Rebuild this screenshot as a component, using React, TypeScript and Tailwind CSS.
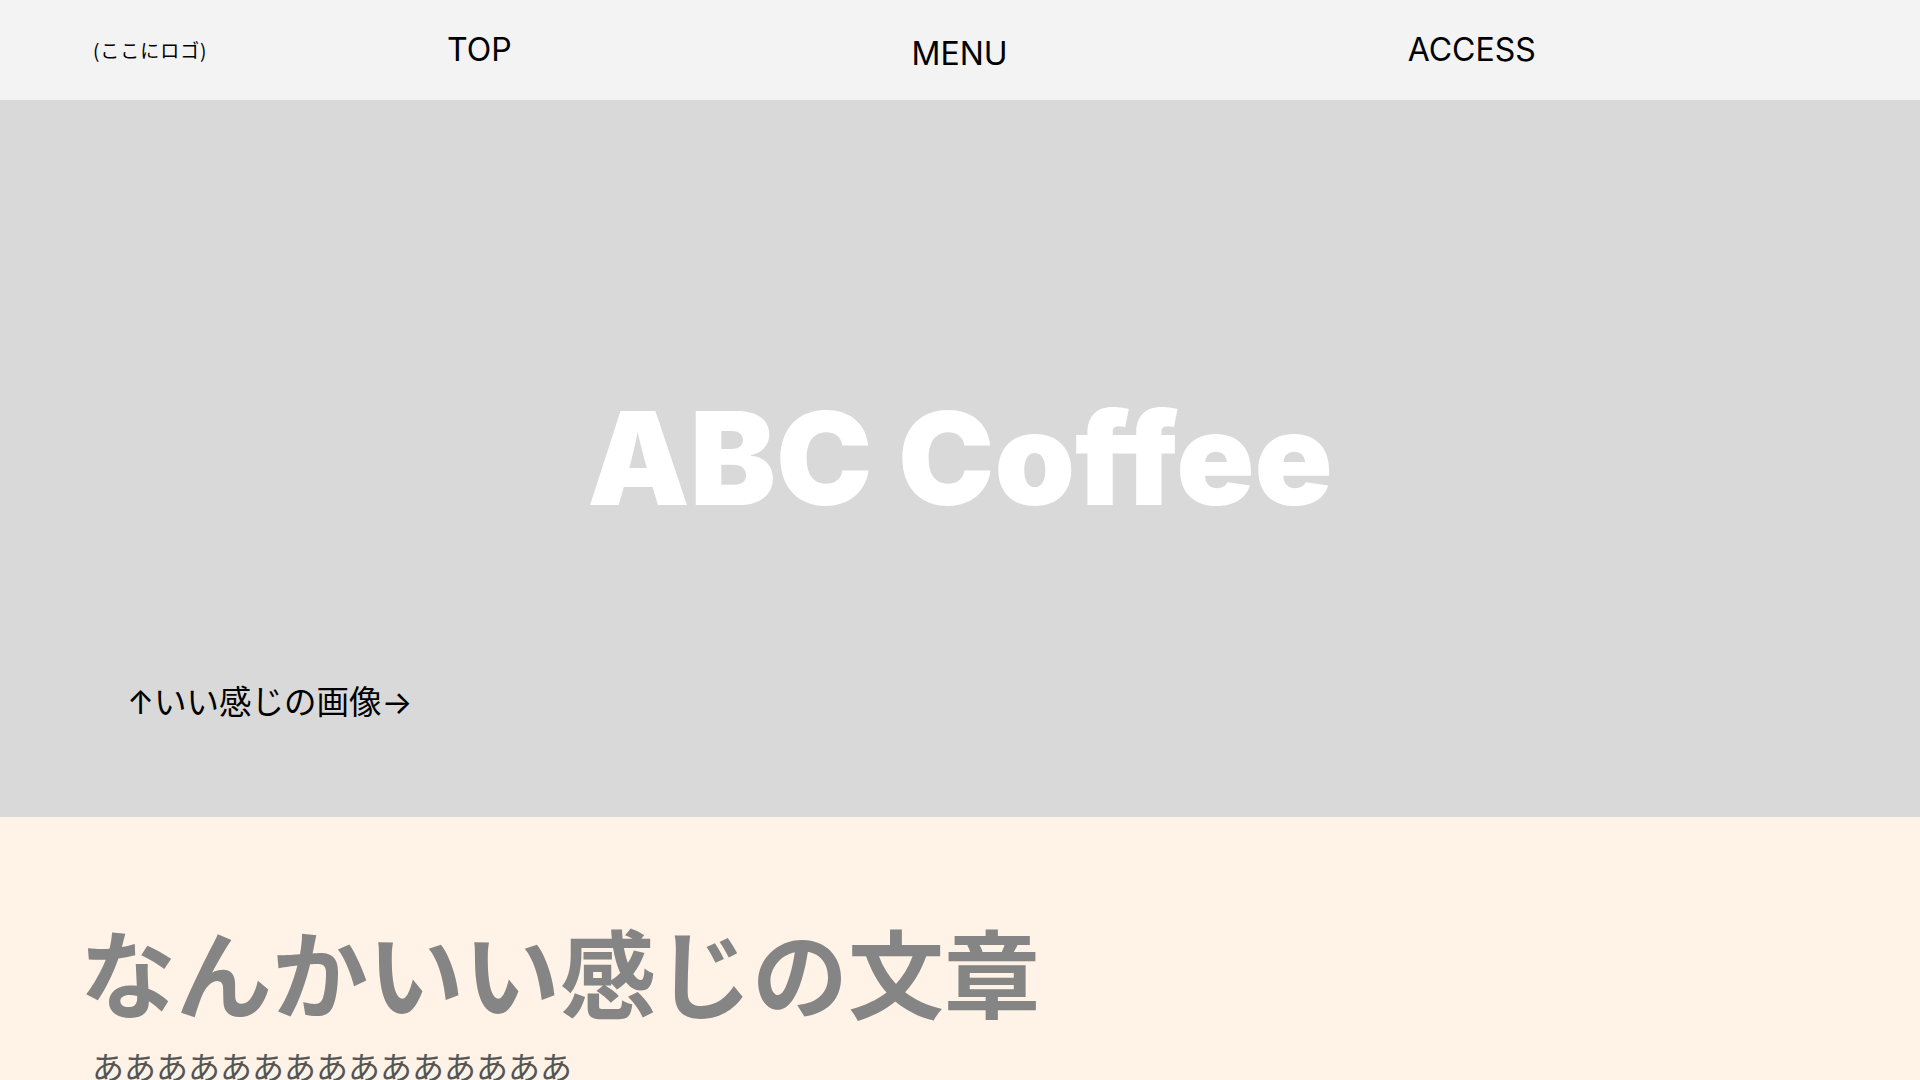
export default function App() {
  const latin = "font-['Inter','Noto_Sans_CJK_JP',sans-serif]";

  return (
    <div className={`min-h-screen bg-[#fff2e6] ${latin}`}>
      {/* Header */}
      <header className="flex h-[100px] items-center bg-[#f3f3f3] text-black">
        <div className="ml-[93px] w-[354px] whitespace-nowrap text-[19px] tracking-[0.05em] font-['Noto_Sans_CJK_JP',sans-serif]">
          (ここにロゴ)
        </div>
        <nav className="flex items-center gap-[400px] text-[32px]">
          <a href="#" className="leading-none">TOP</a>
          <a href="#" className="mt-2 leading-none">MENU</a>
          <a href="#" className="leading-none">ACCESS</a>
        </nav>
      </header>

      {/* Hero */}
      <section className="relative flex h-[717px] items-center justify-center bg-[#d9d9d9]">
        <h1 className="text-[129px] font-black leading-none text-white">ABC Coffee</h1>
        <p className="absolute bottom-[89px] left-[127px] text-[32.5px] text-black">
          ↑いい感じの画像→
        </p>
      </section>

      {/* About */}
      <section className="px-[80px] pt-[105px] pb-20">
        <h2 className="text-[96px] font-bold leading-none text-[#858585] font-['Noto_Sans_CJK_JP',sans-serif]">
          なんかいい感じの文章
        </h2>
        <p className="mt-[23px] pl-[12px] text-[32px] text-[#555555] font-['Noto_Sans_CJK_JP',sans-serif]">
          あああああああああああああああ
        </p>
      </section>
    </div>
  );
}
